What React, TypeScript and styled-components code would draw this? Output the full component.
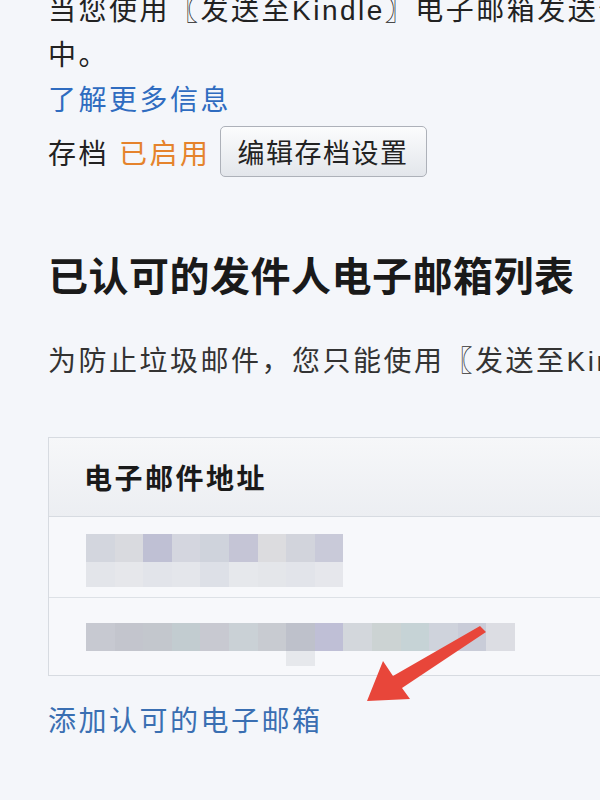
import React from 'react';
import styled, { createGlobalStyle } from 'styled-components';

const GlobalStyle = createGlobalStyle`
  html, body {
    margin: 0;
    padding: 0;
    background: #f4f6fa;
  }
  body {
    font-family: "Liberation Sans", "Noto Sans CJK SC", sans-serif;
    color: #222;
  }
`;

const row1Top = ['#d3d6de', '#d9dadf', '#bfc0d4', '#d4d6df', '#cfd3dc', '#c5c5d6', '#dcdcdf', '#d2d4dc', '#c9cad9'];
const row1Bottom = ['#e3e5ea', '#e6e7eb', '#e2e4ea', '#e4e6eb', '#dde0e7', '#e6e8ec', '#e4e6ea', '#e2e4ea', '#e6e7ec'];
const row2 = [
  '#c7c9d1', '#c3c5cd', '#c3c7cd', '#c2ccd0', '#c8c9d1', '#cad1d6', '#c8cbd1', '#bec1cb',
  '#bfbfd6', '#d3d7dc', '#ccd3d3', '#c6d3d6', '#cfd3dc', '#c9ccd8', '#dcdde3',
];

const App: React.FC = () => {
  return (
    <Page>
      <GlobalStyle />
      <Intro>
        <Line>当您使用〖发送至Kindle〗电子邮箱发送个人文档时，文档将存档在您的Kindle文库</Line>
        <Line>中。</Line>
        <Link>了解更多信息</Link>
      </Intro>
      <ArchiveRow>
        <span>存档</span>
        <Status>已启用</Status>
        <Button type="button">编辑存档设置</Button>
      </ArchiveRow>

      <Heading>已认可的发件人电子邮箱列表</Heading>
      <Note>为防止垃圾邮件，您只能使用〖发送至Kindle〗电子邮箱接收来自以下地址的文档。</Note>

      <Table>
        <HeaderRow>电子邮件地址</HeaderRow>
        <Row $height={80}>
          <Mosaic>
            <MosaicLine>
              {row1Top.map((c, i) => (
                <Cell key={i} $color={c} $h={28} />
              ))}
            </MosaicLine>
            <MosaicLine>
              {row1Bottom.map((c, i) => (
                <Cell key={i} $color={c} $h={25} />
              ))}
            </MosaicLine>
          </Mosaic>
        </Row>
        <Row $height={78} $pad={25}>
          <Mosaic>
            <MosaicLine>
              {row2.map((c, i) => (
                <Cell key={i} $color={c} $h={28} />
              ))}
            </MosaicLine>
            <MosaicLine>
              {[0, 1, 2, 3, 4, 5, 6].map((i) => (
                <Cell key={i} $color="transparent" $h={15} />
              ))}
              <Cell $color="#e6e8ec" $h={15} />
            </MosaicLine>
          </Mosaic>
        </Row>
      </Table>

      <AddLink>添加认可的电子邮箱</AddLink>

      <Arrow viewBox="0 0 600 800" width="600" height="800">
        <polygon
          points="367,701 383,661 393,676 480,626 486,632 402,688 410,699"
          fill="#e8463a"
        />
      </Arrow>
    </Page>
  );
};

export default App;

const Page = styled.div`
  position: relative;
  width: 600px;
  height: 800px;
  overflow: hidden;
  padding-left: 48px;
  box-sizing: border-box;
  font-size: 28px;
  letter-spacing: 2.5px;
`;

const Intro = styled.div`
  margin-top: -12px;
  line-height: 45px;
`;

const Line = styled.div`
  white-space: nowrap;
`;

const Link = styled.div`
  color: #2f6cc0;
`;

const ArchiveRow = styled.div`
  display: flex;
  align-items: center;
  height: 51px;
  margin-top: 3px;
  white-space: nowrap;
`;

const Status = styled.span`
  color: #e5832c;
  margin-left: 10px;
`;

const Button = styled.button`
  margin-left: 9px;
  width: 207px;
  height: 51px;
  padding: 0;
  border: 1px solid #adb1b9;
  border-radius: 5px;
  background: linear-gradient(#fbfcfd, #e3e6eb);
  font-family: inherit;
  font-size: 27px;
  letter-spacing: 1.5px;
  color: #222;
`;

const Heading = styled.h2`
  margin: 75px 0 0;
  font-size: 40px;
  line-height: 50px;
  font-weight: 700;
  letter-spacing: 0.5px;
  color: #1a1a1a;
  white-space: nowrap;
`;

const Note = styled.p`
  margin: 37px 0 0;
  line-height: 45px;
  white-space: nowrap;
  color: #333;
`;

const Table = styled.div`
  margin-top: 53px;
  width: 620px;
  border: 1px solid #d7dbe1;
  border-right: none;
  background: #f7f8fb;
`;

const HeaderRow = styled.div`
  display: flex;
  align-items: center;
  height: 78px;
  padding-left: 35px;
  font-weight: 700;
  color: #1a1a1a;
  background: linear-gradient(#f6f7f9, #eceef2);
  border-bottom: 1px solid #d7dbe1;
`;

const Row = styled.div<{ $height: number; $pad?: number }>`
  box-sizing: border-box;
  height: ${({ $height }) => $height}px;
  padding: ${({ $pad }) => $pad ?? 17}px 0 0 37px;
  & + & {
    border-top: 1px solid #dde1e6;
  }
`;

const Mosaic = styled.div`
  display: flex;
  flex-direction: column;
`;

const MosaicLine = styled.div`
  display: flex;
`;

const Cell = styled.div<{ $color: string; $h: number }>`
  width: 28.6px;
  height: ${({ $h }) => $h}px;
  background: ${({ $color }) => $color};
`;

const AddLink = styled.div`
  margin-top: 23px;
  line-height: 45px;
  color: #3a6fb2;
  white-space: nowrap;
`;

const Arrow = styled.svg`
  position: absolute;
  left: 0;
  top: 0;
  pointer-events: none;
`;
